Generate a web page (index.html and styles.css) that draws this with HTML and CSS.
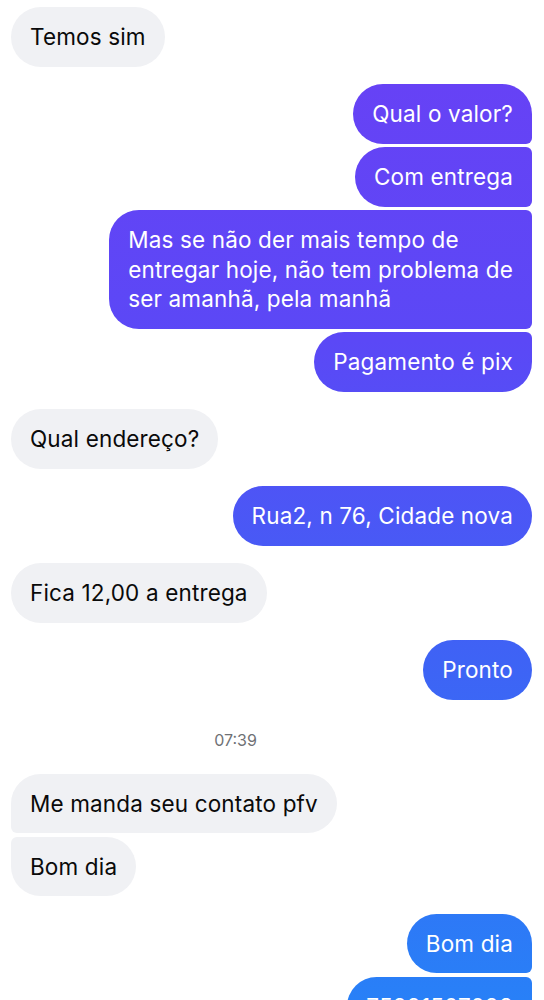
FILE: index.html
```html
<!DOCTYPE html>
<html lang="pt">
<head>
<meta charset="utf-8">
<title>Conversa</title>
<link rel="stylesheet" href="styles.css">
</head>
<body>
<main class="chat">
  <div class="group in">
    <div class="bubble single">Temos sim</div>
  </div>
  <div class="group out">
    <div class="bubble first">Qual o valor?</div>
    <div class="bubble mid">Com entrega</div>
    <div class="bubble mid">Mas se não der mais tempo de<br>entregar hoje, não tem problema de<br>ser amanhã, pela manhã</div>
    <div class="bubble last">Pagamento é pix</div>
  </div>
  <div class="group in">
    <div class="bubble single">Qual endereço?</div>
  </div>
  <div class="group out">
    <div class="bubble single">Rua2, n 76, Cidade nova</div>
  </div>
  <div class="group in">
    <div class="bubble single">Fica 12,00 a entrega</div>
  </div>
  <div class="group out">
    <div class="bubble single">Pronto</div>
  </div>
  <div class="time">07:39</div>
  <div class="group in">
    <div class="bubble first">Me manda seu contato pfv</div>
    <div class="bubble last">Bom dia</div>
  </div>
  <div class="group out">
    <div class="bubble first">Bom dia</div>
    <div class="bubble last">75991507098</div>
  </div>
</main>
</body>
</html>
```
FILE: styles.css
```css
html, body {
  margin: 0;
  padding: 0;
  background: #ffffff;
}
body {
  font-family: "Inter", "Noto Sans", sans-serif;
  -webkit-font-smoothing: antialiased;
}
.chat {
  display: flex;
  flex-direction: column;
  gap: 17.5px;
  padding: 7px 12px 0 11px;
  height: 1000px;
  box-sizing: border-box;
  overflow: hidden;
}
.group {
  display: flex;
  flex-direction: column;
  gap: 3.5px;
}
.group.in { align-items: flex-start; }
.group.out { align-items: flex-end; }
.bubble {
  font-size: 22.5px;
  letter-spacing: 0.15px;
  line-height: 29.5px;
  padding: 15px 19px;
  border-radius: 30px;
  white-space: nowrap;
}
.in .bubble {
  background: #f0f1f4;
  color: #0a0a0a;
}
.out .bubble {
  color: #ffffff;
  background: linear-gradient(to bottom, #6a40f5 0px, #5b48f6 340px, #3e63f5 660px, #2880f7 1000px);
  background-attachment: fixed;
}
.in .first { border-bottom-left-radius: 6px; }
.in .last { border-top-left-radius: 6px; }
.out .first { border-bottom-right-radius: 6px; }
.out .mid { border-top-right-radius: 6px; border-bottom-right-radius: 6px; }
.out .last { border-top-right-radius: 6px; }
.time {
  align-self: center;
  font-size: 16px;
  line-height: 20px;
  color: #6f7175;
  margin: 13px 0 6px;
  transform: translateX(-36px);
}
```
